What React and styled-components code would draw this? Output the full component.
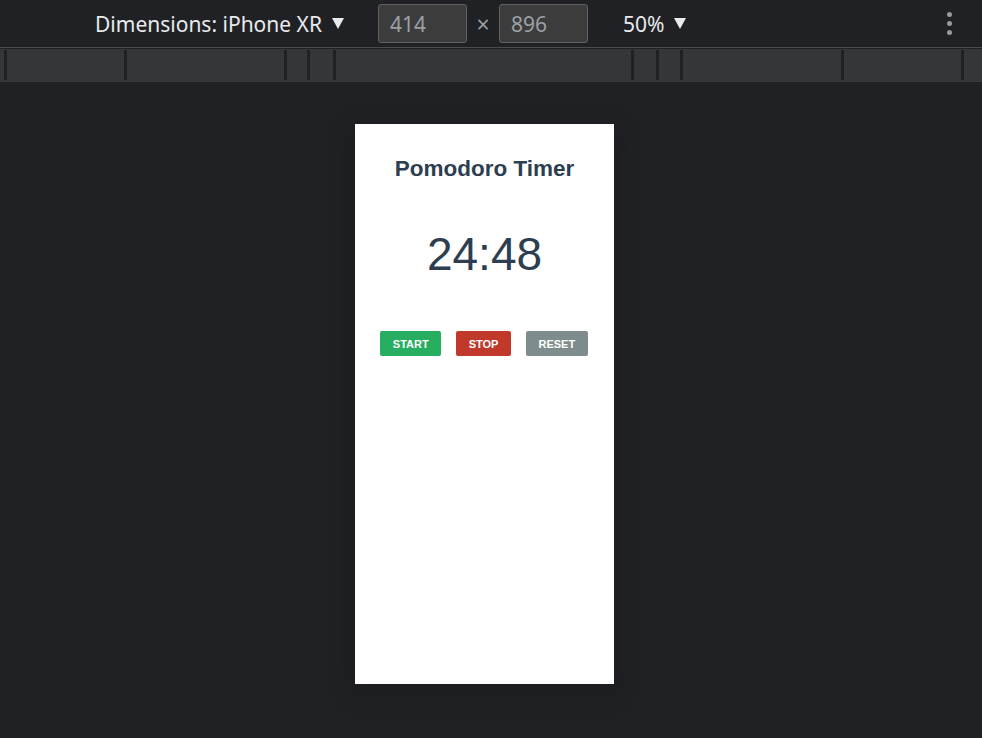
import { Fragment } from "react";
import styled, { createGlobalStyle } from "styled-components";

const GlobalStyle = createGlobalStyle`
  html, body {
    margin: 0;
    padding: 0;
    background: #202124;
  }

  body {
    width: 982px;
    height: 738px;
    overflow: hidden;
    font-family: "Noto Sans", "Open Sans", sans-serif;
  }
`;

const Screen = styled.div`
  display: flex;
  flex-direction: column;
  height: 738px;
  background: #202124;
`;

const Toolbar = styled.div`
  display: flex;
  align-items: center;
  height: 48px;
  padding-left: 95px;
  border-bottom: 1px solid #4a4c50;
  box-sizing: border-box;
  color: #e8eaed;
  font-size: 21px;
`;

const Select = styled.div`
  display: flex;
  align-items: center;
  gap: 10px;
  width: ${(props) => props.width}px;
  white-space: nowrap;
`;

const Caret = styled.span`
  width: 0;
  height: 0;
  border-left: 6px solid transparent;
  border-right: 6px solid transparent;
  border-top: 11px solid #e8eaed;
`;

const SizeInput = styled.div`
  width: 89px;
  height: 39px;
  box-sizing: border-box;
  padding-left: 11px;
  display: flex;
  align-items: center;
  background: #3c3c3c;
  border: 1px solid #5f6163;
  border-radius: 3px;
  color: #9aa0a6;
  font-size: 21px;
`;

const Times = styled.span`
  width: 32px;
  text-align: center;
  color: #9aa0a6;
  font-size: 23px;
`;

const Spacer = styled.div`
  width: ${(props) => props.width}px;
`;

const Kebab = styled.div`
  margin-left: auto;
  margin-right: 30px;
  display: flex;
  flex-direction: column;
  gap: 4px;

  > span {
    width: 5px;
    height: 5px;
    border-radius: 50%;
    background: #9a9a9a;
  }
`;

const Ruler = styled.div`
  display: flex;
  height: 33px;
  margin-top: 1px;
  padding: 1px 0 2px;
  box-sizing: border-box;
  background: #35363a;
`;

const RulerSegment = styled.div`
  width: ${(props) => props.width}px;
  flex-shrink: 0;
`;

const RulerMark = styled.div`
  width: 3px;
  flex-shrink: 0;
  background: #202124;
`;

const Viewport = styled.main`
  flex: 1;
  display: flex;
  justify-content: center;
  align-items: flex-start;
  padding: 42px 13px 0 0;
`;

const Device = styled.div`
  width: 259px;
  height: 560px;
  background: #ffffff;
  box-shadow: 0 6px 26px 4px rgba(0, 0, 0, 0.14);
  display: flex;
  flex-direction: column;
  align-items: center;
  padding-top: 32px;
  box-sizing: border-box;
  font-family: "Liberation Sans", Arial, sans-serif;
  color: #2c3e50;
`;

const Title = styled.h1`
  margin: 0;
  font-size: 22.5px;
  line-height: 26px;
  font-weight: 700;
`;

const Clock = styled.div`
  margin-top: 46px;
  font-size: 46px;
  line-height: 52px;
`;

const Controls = styled.div`
  display: flex;
  gap: 15px;
  margin-top: 51px;
  margin-right: 1px;
`;

const Button = styled.button`
  height: 25px;
  padding: 0 12.5px;
  border: none;
  border-radius: 2px;
  background: ${(props) => props.color};
  color: #ffffff;
  font-family: "Liberation Sans", Arial, sans-serif;
  font-size: 11px;
  font-weight: 700;
  cursor: pointer;
`;

const rulerSegments = [4, 117, 157, 20, 23, 295, 22, 21, 158, 117, 18];

const App = () => {
  return (
    <>
      <GlobalStyle />
      <Screen>
        <Toolbar>
          <Select width={283}>
            Dimensions: iPhone XR <Caret />
          </Select>
          <SizeInput>414</SizeInput>
          <Times>×</Times>
          <SizeInput>896</SizeInput>
          <Spacer width={35} />
          <Select width={80}>
            50% <Caret />
          </Select>
          <Kebab>
            <span />
            <span />
            <span />
          </Kebab>
        </Toolbar>

        <Ruler>
          {rulerSegments.map((width, i) => (
            <Fragment key={i}>
              {i > 0 && <RulerMark />}
              <RulerSegment width={width} />
            </Fragment>
          ))}
        </Ruler>

        <Viewport>
          <Device>
            <Title>Pomodoro Timer</Title>
            <Clock>24:48</Clock>
            <Controls>
              <Button color="#27ae60">START</Button>
              <Button color="#c0392b">STOP</Button>
              <Button color="#7f8c8d">RESET</Button>
            </Controls>
          </Device>
        </Viewport>
      </Screen>
    </>
  );
};

export default App;
